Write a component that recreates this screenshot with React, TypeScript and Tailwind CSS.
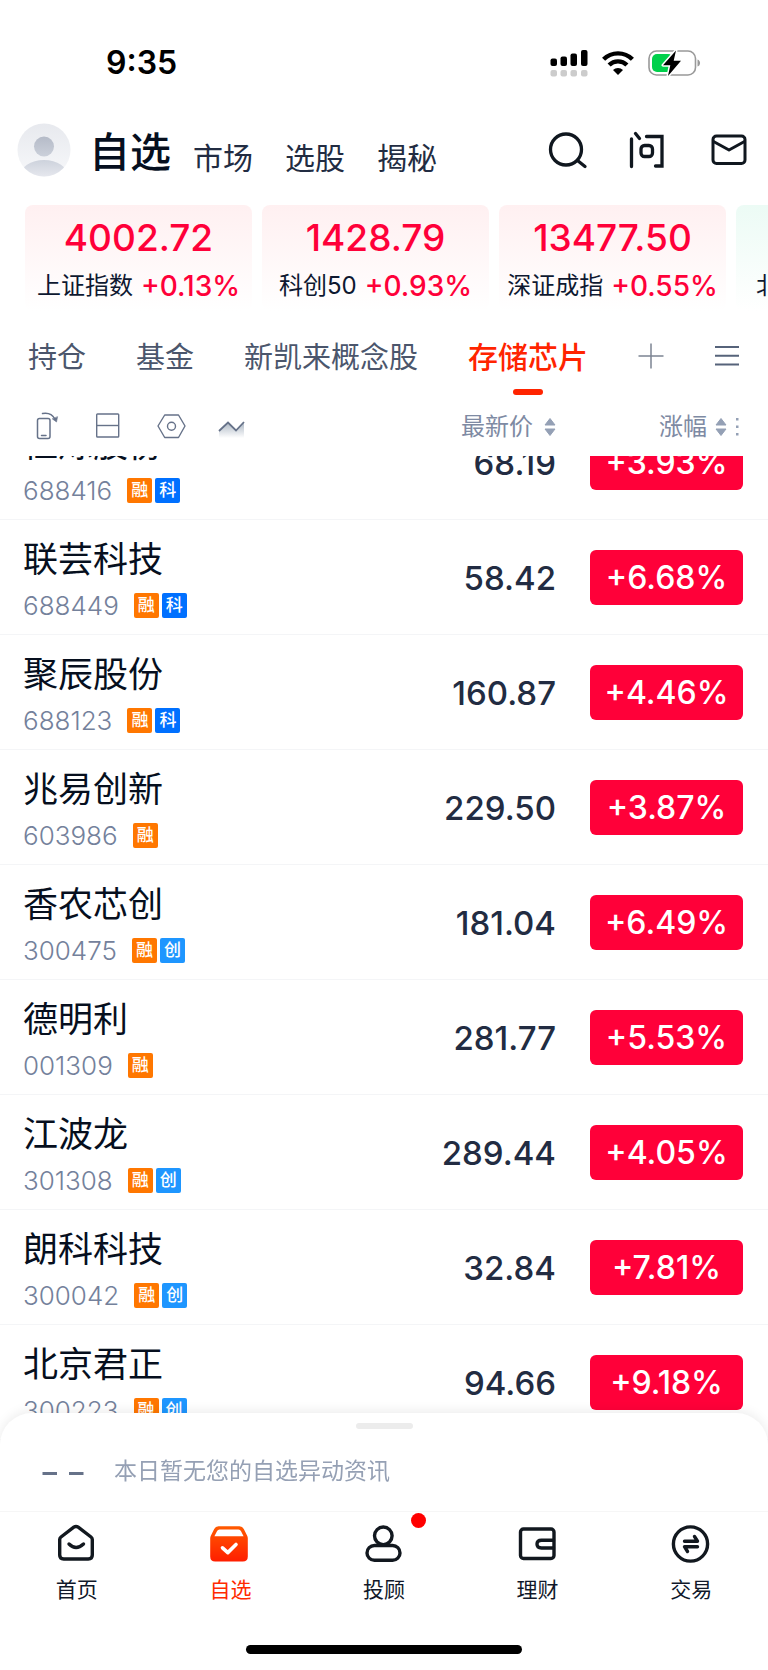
import { useLayoutEffect, useRef } from "react";
import type { ReactNode } from "react";

type TagName = "融" | "科" | "创";

type Stock = { name: string; code: string; tags: TagName[]; price: string; change: string };

const stocks: Stock[] = [
  { name: "恒烁股份", code: "688416", tags: ["融", "科"], price: "68.19", change: "+3.93%" },
  { name: "联芸科技", code: "688449", tags: ["融", "科"], price: "58.42", change: "+6.68%" },
  { name: "聚辰股份", code: "688123", tags: ["融", "科"], price: "160.87", change: "+4.46%" },
  { name: "兆易创新", code: "603986", tags: ["融"], price: "229.50", change: "+3.87%" },
  { name: "香农芯创", code: "300475", tags: ["融", "创"], price: "181.04", change: "+6.49%" },
  { name: "德明利", code: "001309", tags: ["融"], price: "281.77", change: "+5.53%" },
  { name: "江波龙", code: "301308", tags: ["融", "创"], price: "289.44", change: "+4.05%" },
  { name: "朗科科技", code: "300042", tags: ["融", "创"], price: "32.84", change: "+7.81%" },
  { name: "北京君正", code: "300223", tags: ["融", "创"], price: "94.66", change: "+9.18%" },
];

const indices = [
  { name: "上证指数", value: "4002.72", change: "+0.13%" },
  { name: "科创50", value: "1428.79", change: "+0.93%" },
  { name: "深证成指", value: "13477.50", change: "+0.55%" },
];

const tagColors: Record<TagName, string> = {
  融: "bg-[#ff7700]",
  科: "bg-[#0070ff]",
  创: "bg-[#1e96ff]",
};

function StatusBar() {
  return (
    <div className="flex h-[86px] shrink-0 items-center justify-between pt-10 pr-[67px] pl-[106px]">
      <span className="text-[32px] leading-[46px] font-semibold text-black">9:35</span>
      <div className="flex items-center">
        <svg className="mr-3.5" width="38" height="28" viewBox="0 0 38 28" aria-hidden="true">
          <g fill="#000">
            <rect x="0.5" y="9.5" width="6.5" height="7.5" rx="2" />
            <rect x="10.5" y="7.5" width="6.5" height="9.5" rx="2" />
            <rect x="20.5" y="4.5" width="6.5" height="12.5" rx="2" />
            <rect x="31" y="1" width="6.5" height="16" rx="2" />
          </g>
          <g fill="#ccc">
            <rect x="0.5" y="21" width="6.5" height="6.5" rx="2" />
            <rect x="10.5" y="21" width="6.5" height="6.5" rx="2" />
            <rect x="20.5" y="21" width="6.5" height="6.5" rx="2" />
            <rect x="31" y="21" width="6.5" height="6.5" rx="2" />
          </g>
        </svg>
        <svg className="mr-3.5" width="32" height="26" viewBox="0 0 32 26" aria-hidden="true">
          <g fill="none" stroke="#000" strokeWidth="4.4">
            <path d="M1.6 9.3a20.5 20.5 0 0 1 28.8 0" />
            <path d="M7.1 15a12.7 12.7 0 0 1 17.8 0" />
          </g>
          <path d="M16 25l-5-5a7.2 7.2 0 0 1 10 0z" fill="#000" />
        </svg>
        <svg width="53" height="28" viewBox="0 0 53 28" aria-hidden="true">
          <rect x="1" y="2" width="46.5" height="24" rx="7.5" fill="#fff" stroke="#999" strokeWidth="1.6" />
          <path d="M49.5 10.5c3.4 1 3.4 6 0 7z" fill="#999" />
          <rect x="4" y="5" width="21" height="18" rx="5" fill="#00d04b" />
          <path d="M28 1.500L15 16.200h7.300L20 27l13-15.200h-7.300z" fill="#000" stroke="#fff" strokeWidth="3" strokeLinejoin="round" paintOrder="stroke" />
        </svg>
      </div>
    </div>
  );
}

function Header() {
  return (
    <header className="flex h-[119px] shrink-0 items-center pt-[9px] pr-5 pl-[17px]">
      <a href="#me" aria-label="我的" className="shrink-0">
        <svg width="54" height="54" viewBox="0 0 54 54" aria-hidden="true">
          <defs>
            <linearGradient id="avatarBg" x1="0" y1="0" x2="0" y2="1">
              <stop offset="0" stopColor="#e7e9ee" />
              <stop offset="1" stopColor="#f7f8fa" />
            </linearGradient>
            <linearGradient id="avatarHead" x1="0" y1="0" x2="0" y2="1">
              <stop offset="0" stopColor="#b5bbc8" />
              <stop offset="1" stopColor="#cbd0da" />
            </linearGradient>
            <linearGradient id="avatarBody" gradientUnits="userSpaceOnUse" x1="0" y1="37" x2="0" y2="54">
              <stop offset="0" stopColor="#cdd2dc" />
              <stop offset="1" stopColor="#e6e8ee" />
            </linearGradient>
            <clipPath id="avatarClip">
              <circle cx="27" cy="27" r="26.500" />
            </clipPath>
          </defs>
          <g clipPath="url(#avatarClip)">
            <rect width="54" height="54" fill="url(#avatarBg)" />
            <circle cx="27" cy="23.500" r="10" fill="url(#avatarHead)" />
            <ellipse cx="27" cy="53" rx="24" ry="16" fill="url(#avatarBody)" />
          </g>
        </svg>
      </a>
      <nav className="ml-[18px] flex items-end pt-1 text-[30px] leading-10 text-[#222c42]">
        <a href="#watch" className="mr-[22px] text-[41px] leading-[52px] font-medium text-[#060f1e]">自选</a>
        <a href="#market" className="mr-8">市场</a>
        <a href="#pick" className="mr-8">选股</a>
        <a href="#secret">揭秘</a>
      </nav>
      <div className="ml-auto flex items-center gap-10 text-[#10171f]">
        <button type="button" aria-label="搜索">
          <svg width="40" height="40" viewBox="0 0 40 40" fill="none" stroke="currentColor" strokeWidth="3.300" strokeLinecap="round">
            <circle cx="18" cy="19.500" r="15.500" />
            <path d="M29.500 30.500l7.500 6" />
          </svg>
        </button>
        <button type="button" aria-label="问">
          <svg width="40" height="40" viewBox="0 0 40 40" fill="none" stroke="currentColor" strokeWidth="3.300" strokeLinecap="round" strokeLinejoin="round">
            <path d="M3.500 9V36.500M7.500 3.500l4 5" />
            <path d="M18.500 6.500H34V36H27.500" strokeLinejoin="miter" />
            <rect x="13" y="15.500" width="11.500" height="11" rx="3.500" />
          </svg>
        </button>
        <button type="button" aria-label="消息">
          <svg width="40" height="40" viewBox="0 0 40 40" fill="none" stroke="currentColor" strokeWidth="3" strokeLinecap="round" strokeLinejoin="round">
            <rect x="5" y="6" width="32" height="27.500" rx="3.500" />
            <path d="M5.500 11.500l15.500 8.500 15.500-8.500" />
          </svg>
        </button>
      </div>
    </header>
  );
}

function IndexCards() {
  return (
    <section className="flex shrink-0 gap-2.5 overflow-hidden pl-[25px]">
      {indices.map((item) => (
        <a
          key={item.name}
          href="#index"
          className="flex h-[106px] w-[227px] shrink-0 flex-col items-center rounded-lg bg-linear-to-b from-[#fff0f1] to-white pt-2.5 text-[#ff0039]"
        >
          <span className="text-[37px] leading-[46px] font-medium">{item.value}</span>
          <span className="flex items-center gap-2 leading-[50px] whitespace-nowrap">
            <span className="text-[24px] text-[#0e1830]">{item.name}</span>
            <span className="text-[28px] font-medium">{item.change}</span>
          </span>
        </a>
      ))}
      <a
        href="#index"
        className="flex h-[106px] w-[227px] shrink-0 flex-col rounded-lg bg-linear-to-b from-[#ecfbf5] to-white pt-14 pl-5"
      >
        <span className="text-[24px] leading-[50px] text-[#0e1830]">北</span>
      </a>
    </section>
  );
}

function GroupTabs() {
  return (
    <nav className="flex h-[85px] shrink-0 items-start justify-between pt-6 pr-7 pl-7 text-[29px] leading-[45px] text-[#4b566c]">
      <a href="#hold">持仓</a>
      <a href="#fund">基金</a>
      <a href="#concept">新凯来概念股</a>
      <a href="#storage" aria-current="page" className="flex flex-col items-center gap-[9px] text-[30px] font-medium text-[#ff2400]">
        存储芯片
        <span className="h-1.5 w-[30px] rounded-full bg-[#ff2400]" />
      </a>
      <button type="button" aria-label="添加分组" className="flex h-[42px] items-center">
        <svg width="26" height="26" viewBox="0 0 26 26" stroke="#7c8493" strokeWidth="1.500">
          <path d="M13 0.500V25.500M0.500 13H25.500" />
        </svg>
      </button>
      <button type="button" aria-label="分组管理" className="flex h-[42px] items-center">
        <svg width="26" height="26" viewBox="0 0 26 26" stroke="#56637a" strokeWidth="1.900">
          <path d="M1 4H25M1 12.700H25M1 21.500H25" />
        </svg>
      </button>
    </nav>
  );
}

function SortArrows() {
  return (
    <svg width="12" height="20" viewBox="0 0 12 20" fill="#94a0b5" aria-hidden="true">
      <path d="M6 1.500l5 6.500H1zM6 18.500l5-6.500H1z" stroke="#94a0b5" strokeLinejoin="round" />
    </svg>
  );
}

function ViewTools() {
  return (
    <div className="flex items-center text-[#667289]">
      <button type="button" aria-label="横屏" className="mr-[35px]">
        <svg width="26" height="30" viewBox="0 0 26 30" fill="none" stroke="currentColor" strokeWidth="1.500" strokeLinecap="round">
          <rect x="3.500" y="7.500" width="12.500" height="20" rx="2" />
          <path d="M7.500 24.500h4.500M8.500 2.500c5.500-1 10 1 12.300 5.500" />
          <path d="M18.500 8l4 3 1-5z" fill="currentColor" strokeWidth="0.600" />
        </svg>
      </button>
      <button type="button" aria-label="布局" className="mr-[37px]">
        <svg width="25" height="26" viewBox="0 0 25 26" fill="none" stroke="currentColor" strokeWidth="1.400">
          <rect x="1.700" y="1" width="22" height="23" rx="0.800" />
          <path d="M1.700 12.500h22" />
        </svg>
      </button>
      <button type="button" aria-label="设置" className="mr-8">
        <svg width="29" height="26" viewBox="0 0 29 26" fill="none" stroke="currentColor" strokeWidth="1.400" strokeLinejoin="round">
          <path d="M7.700 2H21.500L28 13 21.500 24.500H7.700L1 13z" />
          <circle cx="14.500" cy="13.300" r="4" />
        </svg>
      </button>
      <button type="button" aria-label="走势">
        <svg width="27" height="26" viewBox="0 0 27 26" fill="none">
          <defs>
            <linearGradient id="trendFill" x1="0" y1="0" x2="0" y2="1">
              <stop offset="0" stopColor="#aab5c2" />
              <stop offset="1" stopColor="#aab5c2" stopOpacity="0" />
            </linearGradient>
          </defs>
          <path d="M1 18l9-8.500 8 8 8-8.500v16H1z" fill="url(#trendFill)" />
          <path d="M1 18l9-8.500 8 8 8-8.500" stroke="currentColor" strokeWidth="1.800" />
        </svg>
      </button>
    </div>
  );
}

function StockTable() {
  const scroller = useRef<HTMLDivElement>(null);

  useLayoutEffect(() => {
    if (scroller.current) scroller.current.scrollTop = 51;
  }, []);

  return (
    <div ref={scroller} className="min-h-0 flex-1 overflow-y-auto pb-20 [scrollbar-width:none]">
      <table className="w-full border-separate border-spacing-0">
        <thead className="sticky top-0 z-10 bg-white text-[24px] leading-[34px] text-[#7e8aa3]">
          <tr className="h-[60px]">
            <th className="p-0 pl-[34px]">
              <ViewTools />
            </th>
            <th className="p-0 pt-0.5 font-normal">
              <button type="button" className="ml-auto flex items-center gap-[11px]">
                最新价
                <SortArrows />
              </button>
            </th>
            <th className="w-[212px] p-0 pt-0.5 pr-[29px] font-normal">
              <button type="button" className="ml-auto flex items-center gap-2">
                涨幅
                <SortArrows />
                <svg width="4" height="20" viewBox="0 0 4 20" fill="#94a0b5" aria-hidden="true">
                  <rect x="1" y="1" width="2.500" height="2.500" />
                  <rect x="1" y="8.500" width="2.500" height="2.500" />
                  <rect x="1" y="16" width="2.500" height="2.500" />
                </svg>
              </button>
            </th>
          </tr>
        </thead>
        <tbody>
          {stocks.map((stock) => (
            <tr key={stock.code} className="h-[115px]">
              <th scope="row" className="border-b border-[#f4f5f7] p-0 pt-[9px] pl-[23px] text-left font-normal">
                <div className="text-[35px] leading-[48px] text-[#060f1e]">{stock.name}</div>
                <div className="flex items-center gap-[3px] text-[26px] leading-[46px] font-light text-[#74819b]">
                  <span className="mr-3">{stock.code}</span>
                  {stock.tags.map((tag) => (
                    <span
                      key={tag}
                      className={`flex size-[25px] items-center justify-center rounded-xs text-[17px] leading-[25px] font-medium text-white ${tagColors[tag]}`}
                    >
                      {tag}
                    </span>
                  ))}
                </div>
              </th>
              <td className="border-b border-[#f4f5f7] p-0 pt-0.5 text-right text-[33px] leading-[55px] font-medium text-[#222c42]">
                {stock.price}
              </td>
              <td className="border-b border-[#f4f5f7] p-0 pr-[25px]">
                <div className="ml-auto w-[153px] rounded-md bg-[#ff0039] text-center text-[32px] leading-[55px] font-medium text-white">
                  {stock.change}
                </div>
              </td>
            </tr>
          ))}
        </tbody>
      </table>
    </div>
  );
}

function NewsSheet() {
  return (
    <section className="relative z-20 -mt-8 flex h-[98px] shrink-0 flex-col rounded-t-[32px] bg-white pt-2.5 shadow-[0_-2px_12px_rgba(0,0,0,0.08)]">
      <div className="mx-auto h-1.5 w-[57px] rounded-full bg-[#ececec]" />
      <div className="flex items-center gap-[30px] pt-6 pl-[42px]">
        <svg width="42" height="36" viewBox="0 0 42 36" aria-hidden="true">
          <path d="M0.500 20.500h14.500M27 20.500h14.500" stroke="#667289" strokeWidth="3" />
        </svg>
        <p className="text-[23px] leading-[36px] text-[#95a0b4]">本日暂无您的自选异动资讯</p>
      </div>
    </section>
  );
}

function NavItem({ label, active, dot, children }: { label: string; active?: boolean; dot?: boolean; children: ReactNode }) {
  return (
    <a
      href="#tab"
      aria-current={active ? "page" : undefined}
      className={`flex flex-1 flex-col items-center gap-3 pt-[11px] text-[21px] leading-[30px] ${active ? "text-[#ff2a00]" : "text-[#10182a]"}`}
    >
      <span className="relative">
        <svg width="40" height="40" viewBox="1 0 40 40" fill="none" stroke="#12181f" strokeWidth="3.400" strokeLinecap="round" strokeLinejoin="round">
          {children}
        </svg>
        {dot && <span className="absolute -top-2.5 left-[47px] size-[15px] rounded-full bg-[#ff0000]" />}
      </span>
      {label}
    </a>
  );
}

function BottomNav() {
  return (
    <nav className="relative z-20 shrink-0 border-t border-[#f6f6f6] bg-white">
      <div className="flex">
        <NavItem label="首页">
          <path d="M17.800 4.200q2.200-1.500 4.400 0L35 14q1.300 1 1.300 2.600V32q0 4-4 4H7.700q-4 0-4-4V16.600q0-1.600 1.300-2.600z" />
          <path d="M13 21q7 7 14.500 0" />
        </NavItem>
        <NavItem label="自选" active>
          <defs>
            <linearGradient id="boxFill" x1="0" y1="0" x2="0" y2="1">
              <stop offset="0" stopColor="#ff5a00" />
              <stop offset="1" stopColor="#ff1e00" />
            </linearGradient>
          </defs>
          <path d="M9.500 3.200H30.500q3 0 4.300 2.800L38.300 13q0.500 1 0.500 2.500V33.500q0 5-5 5H6.200q-5 0-5-5V15.500q0-1.500 0.500-2.500L5.200 6q1.300-2.800 4.300-2.800z" fill="url(#boxFill)" stroke="none" />
          <path d="M10.500 6.500H29.500q1.700 0 2.400 1.500l2.700 5.300H5.400L8.100 8q0.700-1.500 2.400-1.500z" fill="#fff" stroke="none" />
          <path d="M13.500 24.800l5.300 4.800L27 21.500" stroke="#fff" strokeWidth="3.600" />
        </NavItem>
        <NavItem label="投顾" dot>
          <circle cx="20.300" cy="12.800" r="8.800" />
          <rect x="4" y="22.500" width="33" height="14.800" rx="7.400" />
        </NavItem>
        <NavItem label="理财">
          <rect x="3.500" y="6" width="33.500" height="29.500" rx="3" />
          <path d="M36.500 17.200H24.500q-4.500 0-4.500 3.900t4.500 3.900H36.500" />
        </NavItem>
        <NavItem label="交易">
          <circle cx="20.500" cy="21" r="17.100" />
          <path d="M14.500 18.200H27.500L24.500 13.500M27.500 23.700H14.500L17.500 28.500" />
        </NavItem>
      </div>
      <div className="mx-auto mt-10 mb-4 h-[9px] w-[36%] rounded-full bg-black" />
    </nav>
  );
}

export default function App() {
  return (
    <div lang="zh-CN" className="flex h-screen flex-col overflow-hidden bg-white font-['Inter','Noto_Sans_CJK_SC',sans-serif]">
      <StatusBar />
      <Header />
      <IndexCards />
      <GroupTabs />
      <StockTable />
      <NewsSheet />
      <BottomNav />
    </div>
  );
}
